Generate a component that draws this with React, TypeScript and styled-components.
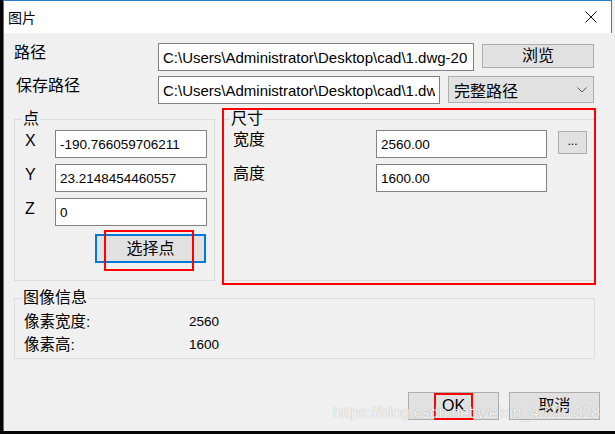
import React from "react";
import styled, { createGlobalStyle } from "styled-components";

const GlobalStyle = createGlobalStyle`
  html, body {
    margin: 0;
    padding: 0;
    background: #000;
  }
  body {
    font-family: "Liberation Sans", "Noto Sans CJK SC", sans-serif;
    color: #000;
  }
  * {
    box-sizing: border-box;
  }
`;

const Screen = styled.div`
  position: relative;
  width: 615px;
  height: 434px;
  background: #060606;
  padding: 0 0 3px 3px;
  display: flex;
`;

const Window = styled.div`
  flex: 1;
  display: flex;
  flex-direction: column;
  background: #f0f0f0;
  border-left: 1px solid #2a7bd2;
`;

const TitleBar = styled.div`
  height: 33px;
  margin-right: 3px;
  background: #fff;
  border-top: 1px solid #2a7bd2;
  border-right: 1px solid #2a7bd2;
  display: flex;
  align-items: center;
  justify-content: space-between;
  padding: 0 14px 0 4px;
  font-size: 14px;
`;

const Body = styled.div`
  flex: 1;
  display: flex;
  flex-direction: column;
  padding: 10px 0 0 10px;
`;

const FormRow = styled.div<{ $cols: string; $top?: number }>`
  display: grid;
  grid-template-columns: ${(p) => p.$cols};
  column-gap: 8px;
  margin-top: ${(p) => p.$top ?? 0}px;
  align-items: start;
`;

const Label = styled.div<{ $indent?: number }>`
  font-size: 16px;
  line-height: 20px;
  padding-left: ${(p) => p.$indent ?? 0}px;
  white-space: nowrap;
`;

const TextBox = styled.input<{ $size?: number }>`
  height: 28px;
  width: 100%;
  margin: 0;
  padding: 0 4px;
  border: 1px solid #828282;
  background: #fff;
  font-family: "Liberation Sans", sans-serif;
  font-size: ${(p) => p.$size ?? 13.5}px;
  color: #000;
  outline: none;
`;

const PushButton = styled.button<{ $w: number; $h: number; $focused?: boolean; $size?: number }>`
  width: ${(p) => p.$w}px;
  height: ${(p) => p.$h}px;
  margin: 0;
  padding: 0;
  background: #e1e1e1;
  border: ${(p) => (p.$focused ? "2px solid #0078d7" : "1px solid #adadad")};
  font-family: "Liberation Sans", "Noto Sans CJK SC", sans-serif;
  font-size: ${(p) => p.$size ?? 16}px;
  line-height: 1;
  color: #000;
`;

const BrowseButton = styled(PushButton)`
  margin-top: 1px;
`;

const Combo = styled.div`
  height: 27px;
  display: flex;
  align-items: center;
  justify-content: space-between;
  padding: 0 6px 0 5px;
  background: #e1e1e1;
  border: 1px solid #adadad;
  font-size: 16px;
`;

const GroupsRow = styled.div`
  display: grid;
  grid-template-columns: 201px 373px;
  column-gap: 7px;
  height: 170px;
  margin-top: 7px;
`;

const Group = styled.fieldset<{ $w?: number; $h?: number; $top?: number }>`
  margin: ${(p) => p.$top ?? 0}px 0 0 0;
  padding: 0;
  min-width: 0;
  border: 1px solid #dcdcdc;
  ${(p) => (p.$w ? `width: ${p.$w}px;` : "")}
  ${(p) => (p.$h ? `height: ${p.$h}px;` : "")}
`;

const Caption = styled.legend`
  margin-left: 7px;
  padding: 0 1px;
  font-size: 16px;
  line-height: 16px;
`;

const FieldGrid = styled.div<{ $cols: string; $gap: number }>`
  display: grid;
  grid-template-columns: ${(p) => p.$cols};
  row-gap: 6px;
  column-gap: ${(p) => p.$gap}px;
  padding: 3px 7px 0 10px;
  align-items: start;
`;

const CoordLabel = styled.div`
  font-size: 16px;
  line-height: 20px;
  padding-top: 1px;
`;

const PickRow = styled.div`
  grid-column: 1 / -1;
  display: flex;
  justify-content: flex-end;
  margin-top: 2px;
  padding-right: 1px;
`;

const MoreButton = styled(PushButton)`
  margin-top: 1px;
  font-size: 12px;
  padding-bottom: 4px;
`;

const InfoGrid = styled.div`
  display: grid;
  grid-template-columns: 165px auto;
  row-gap: 3px;
  padding: 6px 0 0 9px;
`;

const InfoLabel = styled.div`
  font-size: 15.5px;
  line-height: 20px;
`;

const InfoValue = styled.div`
  font-size: 13.5px;
  line-height: 20px;
`;

const Footer = styled.div`
  display: flex;
  justify-content: flex-end;
  gap: 10px;
  margin-top: 33px;
  padding-right: 15px;
`;

const Mark = styled.div<{ $x: number; $y: number; $w: number; $h: number; $color?: string }>`
  position: absolute;
  left: ${(p) => p.$x}px;
  top: ${(p) => p.$y}px;
  width: ${(p) => p.$w}px;
  height: ${(p) => p.$h}px;
  border: 2px solid ${(p) => p.$color ?? "#ff0000"};
  pointer-events: none;
`;

const Watermark = styled.div`
  position: absolute;
  left: 333px;
  top: 403px;
  font-family: "Liberation Sans", sans-serif;
  font-size: 15.7px;
  line-height: 20px;
  color: rgba(255, 255, 255, 0.9);
  text-shadow: 0 0 1px rgba(0, 0, 0, 0.35);
  white-space: nowrap;
  pointer-events: none;
`;

const CloseIcon = () => (
  <svg width="12" height="12" viewBox="0 0 12 12">
    <path d="M0.5 0.5 L11.5 11.5 M11.5 0.5 L0.5 11.5" stroke="#111" strokeWidth="1" fill="none" />
  </svg>
);

const Chevron = () => (
  <svg width="10" height="6" viewBox="0 0 10 6">
    <path d="M0.5 0.5 L5 5 L9.5 0.5" stroke="#555" strokeWidth="1" fill="none" />
  </svg>
);

const sourcePath = "C:\\Users\\Administrator\\Desktop\\cad\\1.dwg-20";
const savePath = "C:\\Users\\Administrator\\Desktop\\cad\\1.dwg-2020.png";

export default function App() {
  return (
    <>
      <GlobalStyle />
      <Screen>
        <Window>
          <TitleBar>
            <span>图片</span>
            <CloseIcon />
          </TitleBar>
          <Body>
            <FormRow $cols="136px 316px 112px">
              <Label>路径</Label>
              <TextBox $size={15} readOnly value={sourcePath} />
              <BrowseButton $w={112} $h={24}>浏览</BrowseButton>
            </FormRow>
            <FormRow $cols="136px 282px 146px" $top={5}>
              <Label $indent={2}>保存路径</Label>
              <TextBox $size={15} readOnly value={savePath} />
              <Combo>
                <span>完整路径</span>
                <Chevron />
              </Combo>
            </FormRow>

            <GroupsRow>
              <Group>
                <Caption>点</Caption>
                <FieldGrid $cols="30px 152px" $gap={0}>
                  <CoordLabel>X</CoordLabel>
                  <TextBox readOnly value="-190.766059706211" />
                  <CoordLabel>Y</CoordLabel>
                  <TextBox readOnly value="23.2148454460557" />
                  <CoordLabel>Z</CoordLabel>
                  <TextBox readOnly value="0" />
                  <PickRow>
                    <PushButton $w={111} $h={29} $focused>选择点</PushButton>
                  </PickRow>
                </FieldGrid>
              </Group>
              <Group>
                <Caption>尺寸</Caption>
                <FieldGrid $cols="132px 171px 29px" $gap={11}>
                  <Label>宽度</Label>
                  <TextBox readOnly value="2560.00" />
                  <MoreButton $w={29} $h={23}>...</MoreButton>
                  <Label>高度</Label>
                  <TextBox readOnly value="1600.00" />
                  <span />
                </FieldGrid>
              </Group>
            </GroupsRow>

            <Group $w={581} $h={69} $top={9}>
              <Caption>图像信息</Caption>
              <InfoGrid>
                <InfoLabel>像素宽度:</InfoLabel>
                <InfoValue>2560</InfoValue>
                <InfoLabel>像素高:</InfoLabel>
                <InfoValue>1600</InfoValue>
              </InfoGrid>
            </Group>

            <Footer>
              <PushButton $w={91} $h={28}>OK</PushButton>
              <PushButton $w={91} $h={28}>取消</PushButton>
            </Footer>
          </Body>
        </Window>

        <Mark $x={222} $y={108} $w={374} $h={177} />
        <Mark $x={104} $y={230} $w={90} $h={41} />
        <Mark $x={434} $y={393} $w={39} $h={27} />
        <Watermark>https://blog.csdn.net/weixin_43221328</Watermark>
      </Screen>
    </>
  );
}
